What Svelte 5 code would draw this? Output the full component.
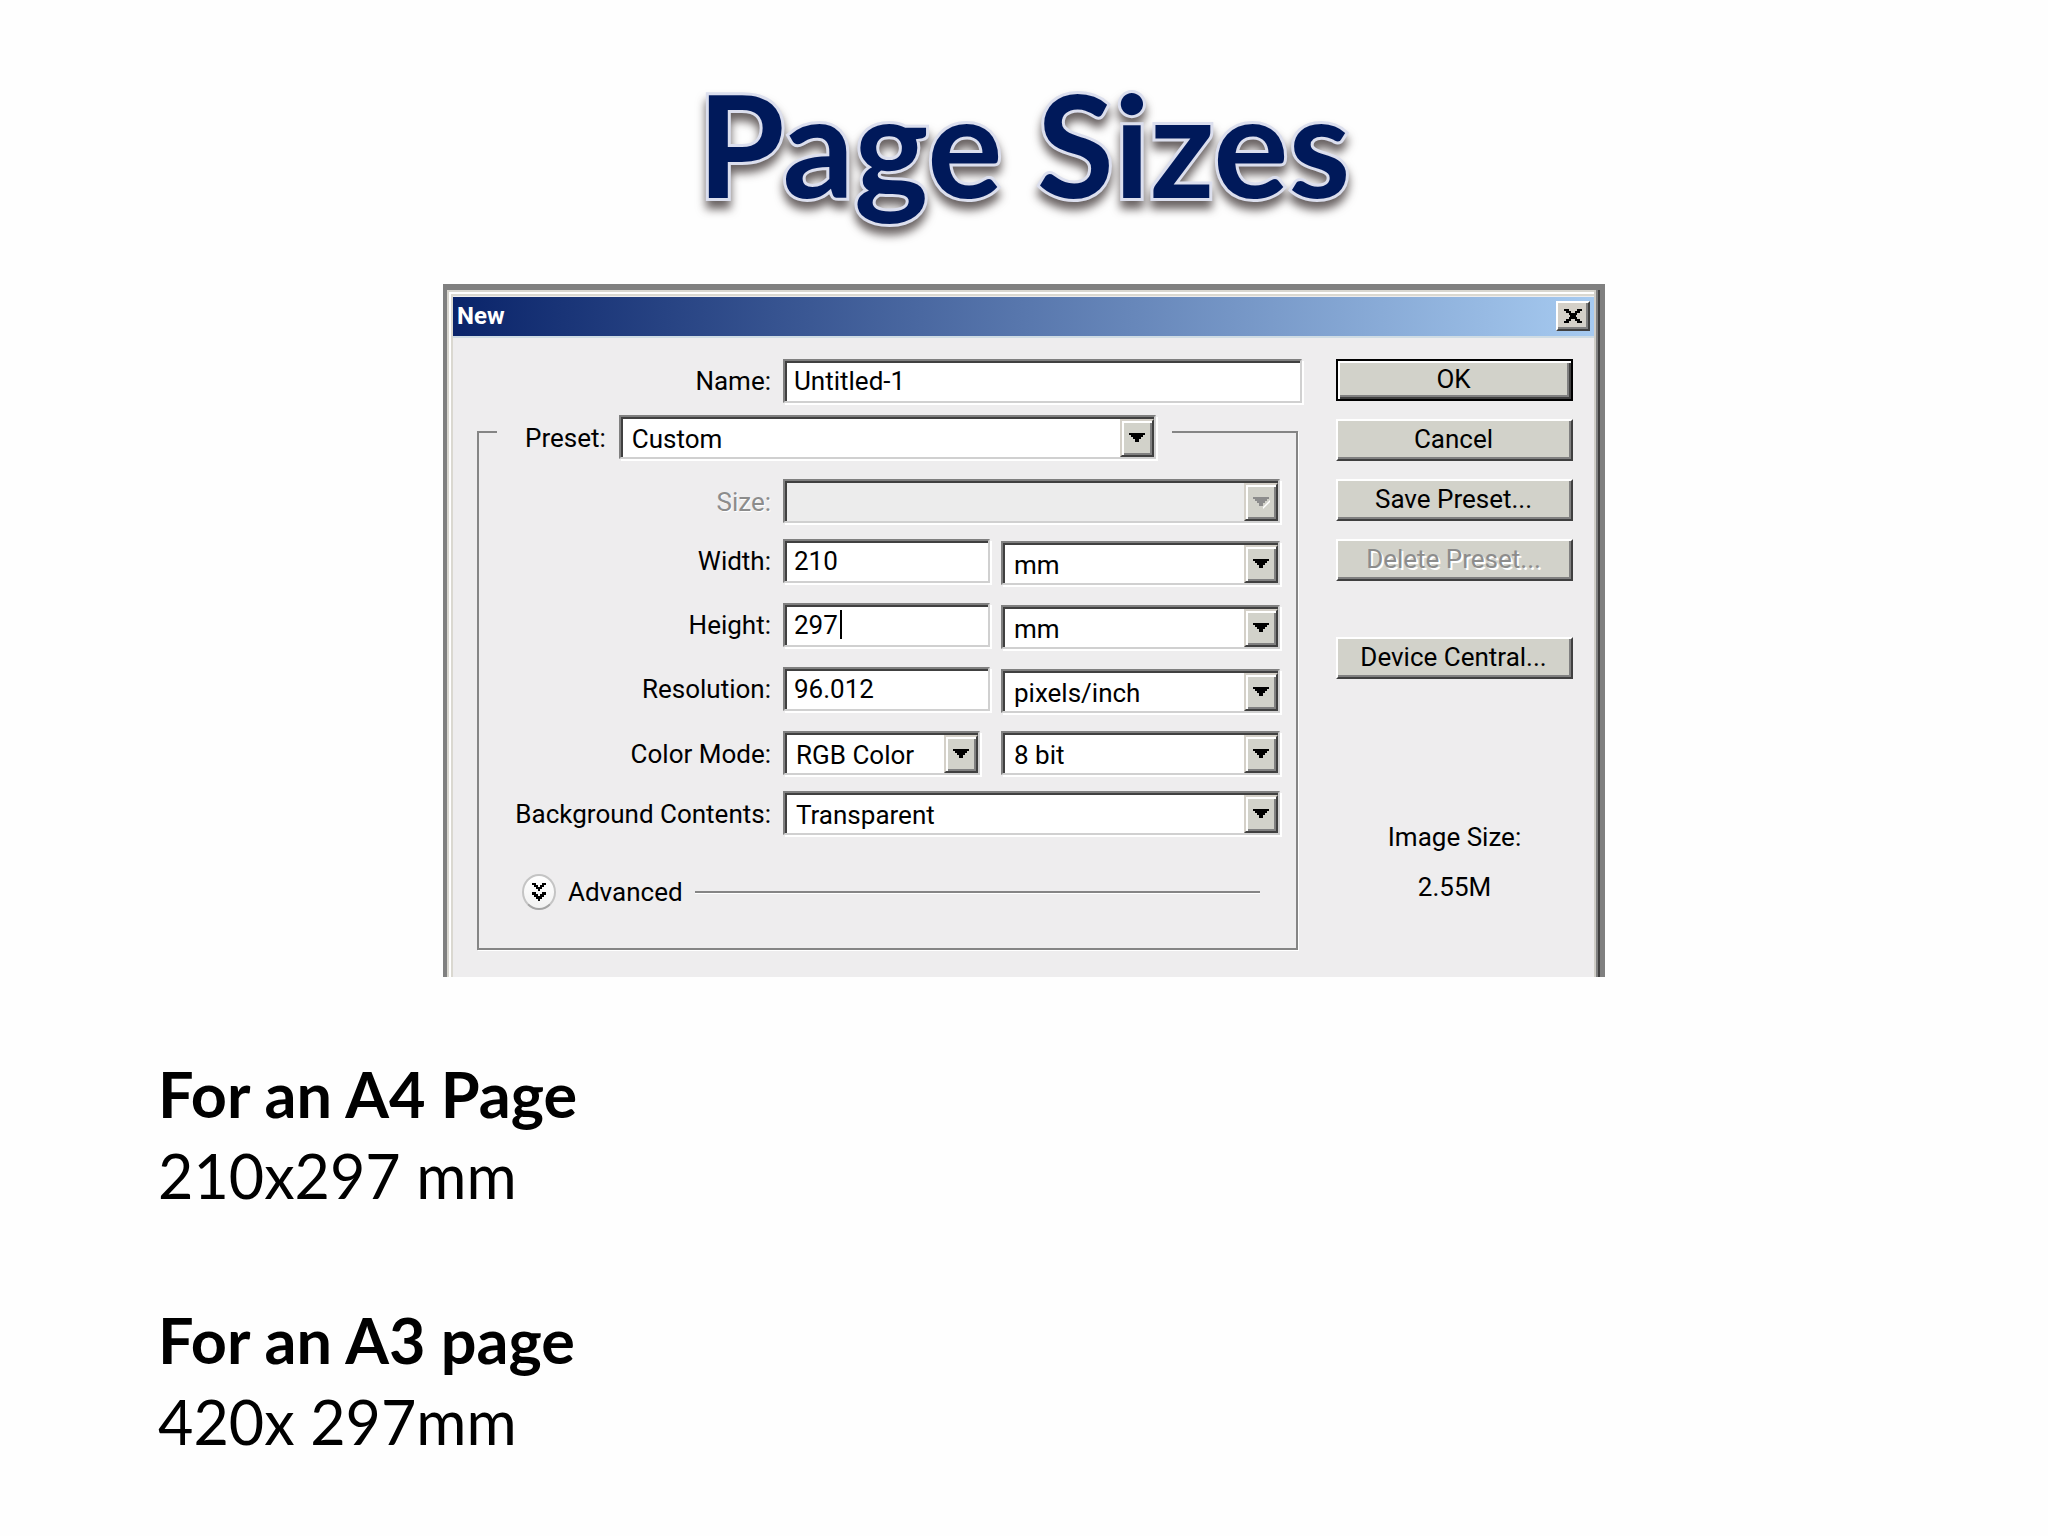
<script>
  const measures = [
    { id: 'width', label: 'Width:', value: '210', unit: 'mm', units: ['mm', 'cm', 'pixels', 'inches'], caret: false },
    { id: 'height', label: 'Height:', value: '297', unit: 'mm', units: ['mm', 'cm', 'pixels', 'inches'], caret: true },
    { id: 'resolution', label: 'Resolution:', value: '96.012', unit: 'pixels/inch', units: ['pixels/inch', 'pixels/cm'], caret: false }
  ];
  const actions = [
    { label: 'OK', kind: 'default' },
    { label: 'Cancel' },
    { label: 'Save Preset...' },
    { label: 'Delete Preset...', disabled: true },
    { label: 'Device Central...', kind: 'apart' }
  ];
</script>

{#snippet dropdown(id, options, disabled = false, name = undefined)}
  <div class="select" class:off={disabled}>
    <select {id} {disabled} aria-label={name}>
      {#each options as option}
        <option>{option}</option>
      {/each}
    </select>
    <span class="arrow" aria-hidden="true">
      <svg viewBox="0 0 16 10">
        {#if disabled}<path class="glint" d="M10 10 17 3v2l-7 7z" />{/if}
        <path d="M0 0h16v2h-2v2h-2v2h-2v3H6V6H4V4H2V2H0z" />
      </svg>
    </span>
  </div>
{/snippet}

<main class="slide">
  <h1>Page Sizes</h1>

  <section class="dialog" aria-labelledby="dialog-title">
    <header class="titlebar">
      <h2 id="dialog-title">New</h2>
      <button class="close" aria-label="Close">
        <svg viewBox="0 0 18 14">
          <path d="M0 0h5v2h2v2h4V2h2V0h5v2h-2v2h-3v2h-1v2h1v2h3v2h2v2h-5v-2h-2v-2H7v2H5v2H0v-2h2v-2h3V8h1V6H5V4H2V2H0z" />
        </svg>
      </button>
    </header>

    <form class="content" onsubmit={(e) => e.preventDefault()}>
      <div class="settings">
        <div class="row name">
          <label for="name">Name:</label>
          <div class="field"><input id="name" type="text" value="Untitled-1" /></div>
        </div>

        <fieldset>
          <legend>
            <label for="preset">Preset:</label>
            {@render dropdown('preset', ['Custom'])}
          </legend>

          <div class="row menu">
            <label class="dim" for="size">Size:</label>
            {@render dropdown('size', [''], true)}
          </div>

          <div class="measures">
            {#each measures as m}
              <div class="row pair">
                <label for={m.id}>{m.label}</label>
                <div class="field">
                  <input id={m.id} type="text" value={m.value} />
                  {#if m.caret}<span class="caret"></span>{/if}
                </div>
                <div class="unit">{@render dropdown(m.id + '-unit', m.units, false, m.label + ' unit')}</div>
              </div>
            {/each}
          </div>

          <div class="row pair menu mode">
            <label for="mode">Color Mode:</label>
            {@render dropdown('mode', ['RGB Color', 'Grayscale', 'Bitmap'])}
            {@render dropdown('depth', ['8 bit', '16 bit'], false, 'Bit depth')}
          </div>

          <div class="row menu">
            <label for="background">Background Contents:</label>
            {@render dropdown('background', ['Transparent', 'White'])}
          </div>

          <div class="advanced">
            <button type="button" class="expand" aria-label="Show advanced options">
              <svg viewBox="0 0 16 18">
                <path d="M1 0h4v2h2v2h2V2h2V0h4v2h-2v2h-2v2H9v2H7V6H5V4H3V2H1zM1 9h4v2h2v2h2v-2h2V9h4v3h-2v2h-2v2H9v2H7v-2H5v-2H3v-2H1z" />
              </svg>
            </button>
            <span>Advanced</span>
            <hr />
          </div>
        </fieldset>
      </div>

      <aside>
        {#each actions as a}
          <button type="button" class={['action', a.kind]} disabled={a.disabled}>{a.label}</button>
        {/each}
        <p class="info">Image Size:</p>
        <p class="info">2.55M</p>
      </aside>
    </form>
  </section>

  <section class="notes">
    <h3>For an A4 Page</h3>
    <p>210x297 mm</p>
    <h3>For an A3 page</h3>
    <p>420x 297mm</p>
  </section>
</main>

<style>
  :global(body) {
    background: #fefefe;
  }

  .slide {
    box-sizing: border-box;
    padding: 62px 48px 52px;
    font-family: Lato, Carlito, sans-serif;
    color: #000;
  }

  h1, h2, h3, p, hr { margin: 0; }

  h1 {
    font-size: 141px;
    line-height: 164px;
    font-weight: 700;
    text-align: center;
    color: #00195a;
    -webkit-text-stroke: 6px #dcdfee;
    paint-order: stroke fill;
    filter: drop-shadow(0 8px 5px rgba(40, 30, 30, 0.7));
  }

  .dialog {
    box-sizing: border-box;
    max-width: 1162px;
    margin: 58px auto 0;
    padding: 7px 6px 0 6px;
    border: solid #808080;
    border-width: 6px 5px 0 4px;
    background: #eeedee;
    box-shadow: inset -2px 0 0 #404040, inset -4px 0 0 #808080, inset -6px 0 0 #d0cec8, inset 2px 2px 0 #d9d7d0, inset 4px 4px 0 #fff, inset 6px 6px 0 #dad8d0;
    font-family: Roboto, "Liberation Sans", sans-serif;
    font-size: 26px;
    line-height: 32px;
  }

  .titlebar {
    display: flex;
    align-items: center;
    justify-content: space-between;
    height: 38px;
    padding: 0 4px 1px;
    background: linear-gradient(90deg, #0a246a, #a6caf0);
    border-bottom: 2px solid #cfdce4;
  }

  .titlebar h2 {
    font-size: 24px;
    font-weight: 700;
    color: #fff;
  }

  .close {
    width: 34px;
    height: 30px;
    padding: 0;
    border: 2px solid;
    border-color: #fff #404040 #404040 #fff;
    background: #d4d0c8;
    box-shadow: inset -2px -2px 0 #808080;
  }

  .close svg { display: block; width: 18px; height: 14px; margin: auto; }

  .content {
    display: grid;
    grid-template-columns: 1fr 237px;
    column-gap: 34px;
    padding: 21px 21px 27px 24px;
  }

  .row {
    display: grid;
    grid-template-columns: 294px 1fr;
    column-gap: 12px;
  }

  .row > label {
    text-align: right;
    line-height: 44px;
  }

  .row.menu > label { padding-top: 2px; line-height: 42px; }

  fieldset .row { grid-template-columns: 292px 1fr; }
  fieldset .row.pair { grid-template-columns: 292px 207px 1fr; }
  .row.pair > :last-child { margin-left: -1px; }

  .dim { color: #8c8c8c; text-shadow: 1px 1px 0 #fff; }

  .field, .select {
    box-sizing: border-box;
    height: 44px;
    border: 2px solid;
    border-color: #808080 #d0d0d0 #d0d0d0 #808080;
    background: #fff;
    box-shadow: inset 2px 2px 0 #404040, 2px 2px 0 #fff;
  }

  .field { position: relative; }

  input, select {
    box-sizing: border-box;
    width: 100%;
    height: 40px;
    margin: 0;
    border: 0;
    background: transparent;
    font: inherit;
    line-height: 32px;
    color: #000;
    outline: none;
    appearance: none;
  }

  input { padding: 0 9px; }

  .caret {
    position: absolute;
    left: 55px;
    top: 5px;
    width: 2px;
    height: 29px;
    background: #000;
  }

  .select { display: grid; grid-template-columns: 1fr 34px; }
  .select select { grid-area: 1 / 1 / 2 / 3; padding: 3px 40px 0 11px; }
  .select.off { background: #ececec; }

  .arrow {
    grid-area: 1 / 2;
    display: grid;
    place-items: center;
    margin-top: 2px;
    box-sizing: border-box;
    border: 2px solid;
    border-color: #d4d0c8 #404040 #404040 #d4d0c8;
    background: #d2d2ca;
    box-shadow: inset 2px 2px 0 #fff, inset -2px -2px 0 #808080;
    pointer-events: none;
  }

  .arrow svg { width: 16px; height: 10px; overflow: visible; }
  .off .arrow path { fill: #8c8c8c; }
  .off .arrow .glint { fill: #fff; }

  fieldset {
    min-width: 0;
    margin: 2px 4px 0 0;
    padding: 20px 16px 38px 0;
    border: 2px solid #858585;
    box-shadow: 1px 1px 0 #fff;
  }

  legend {
    display: grid;
    grid-template-columns: auto 537px;
    column-gap: 13px;
    margin-left: 18px;
    padding: 10px 16px 0 28px;
  }

  legend label { line-height: 46px; height: 44px; }

  .measures {
    display: grid;
    row-gap: 18px;
    margin: 16px 0 18px;
  }

  .pair > .unit { margin: 2px 0 0; }
  .row.pair { column-gap: 12px; }

  .mode { margin-bottom: 16px; }
  .mode > .select:nth-child(2) { margin-right: 10px; }

  .advanced {
    display: grid;
    grid-template-columns: 34px auto 1fr;
    column-gap: 12px;
    align-items: center;
    margin: 39px 20px 0 43px;
  }

  .advanced hr {
    border: 0;
    height: 2px;
    background: #858585;
    box-shadow: 0 1px 0 #fff;
  }

  .expand {
    display: grid;
    place-items: center;
    width: 34px;
    height: 36px;
    padding: 0;
    border: 2px solid #c4c4c4;
    border-bottom-color: #a4a4a4;
    border-radius: 50%;
    background: linear-gradient(#fff, #f2f2f2);
  }

  .expand svg { width: 16px; height: 18px; }

  aside {
    display: flex;
    flex-direction: column;
    gap: 18px;
  }

  .action {
    height: 42px;
    padding: 0 10px 2px 8px;
    border: 2px solid;
    border-color: #fff #404040 #404040 #fff;
    background: #d2d2ca;
    box-shadow: inset -2px -2px 0 #808080;
    font: inherit;
    line-height: 32px;
    color: #000;
  }

  .action.default {
    border-color: #000;
    box-shadow: inset 2px 2px 0 #fff, inset -2px -2px 0 #404040, inset -4px -4px 0 #808080;
  }

  .action.apart { margin: 38px 0 124px; }

  .action:disabled {
    color: #8c8c8c;
    text-shadow: 2px 2px 0 #fff;
  }

  .info { text-align: center; }

  .notes {
    padding: 76px 110px 0;
    font-size: 61px;
    line-height: 82px;
  }

  .notes h3 { font-size: 63px; font-weight: 700; }
  .notes p + h3 { margin-top: 82px; }
</style>
